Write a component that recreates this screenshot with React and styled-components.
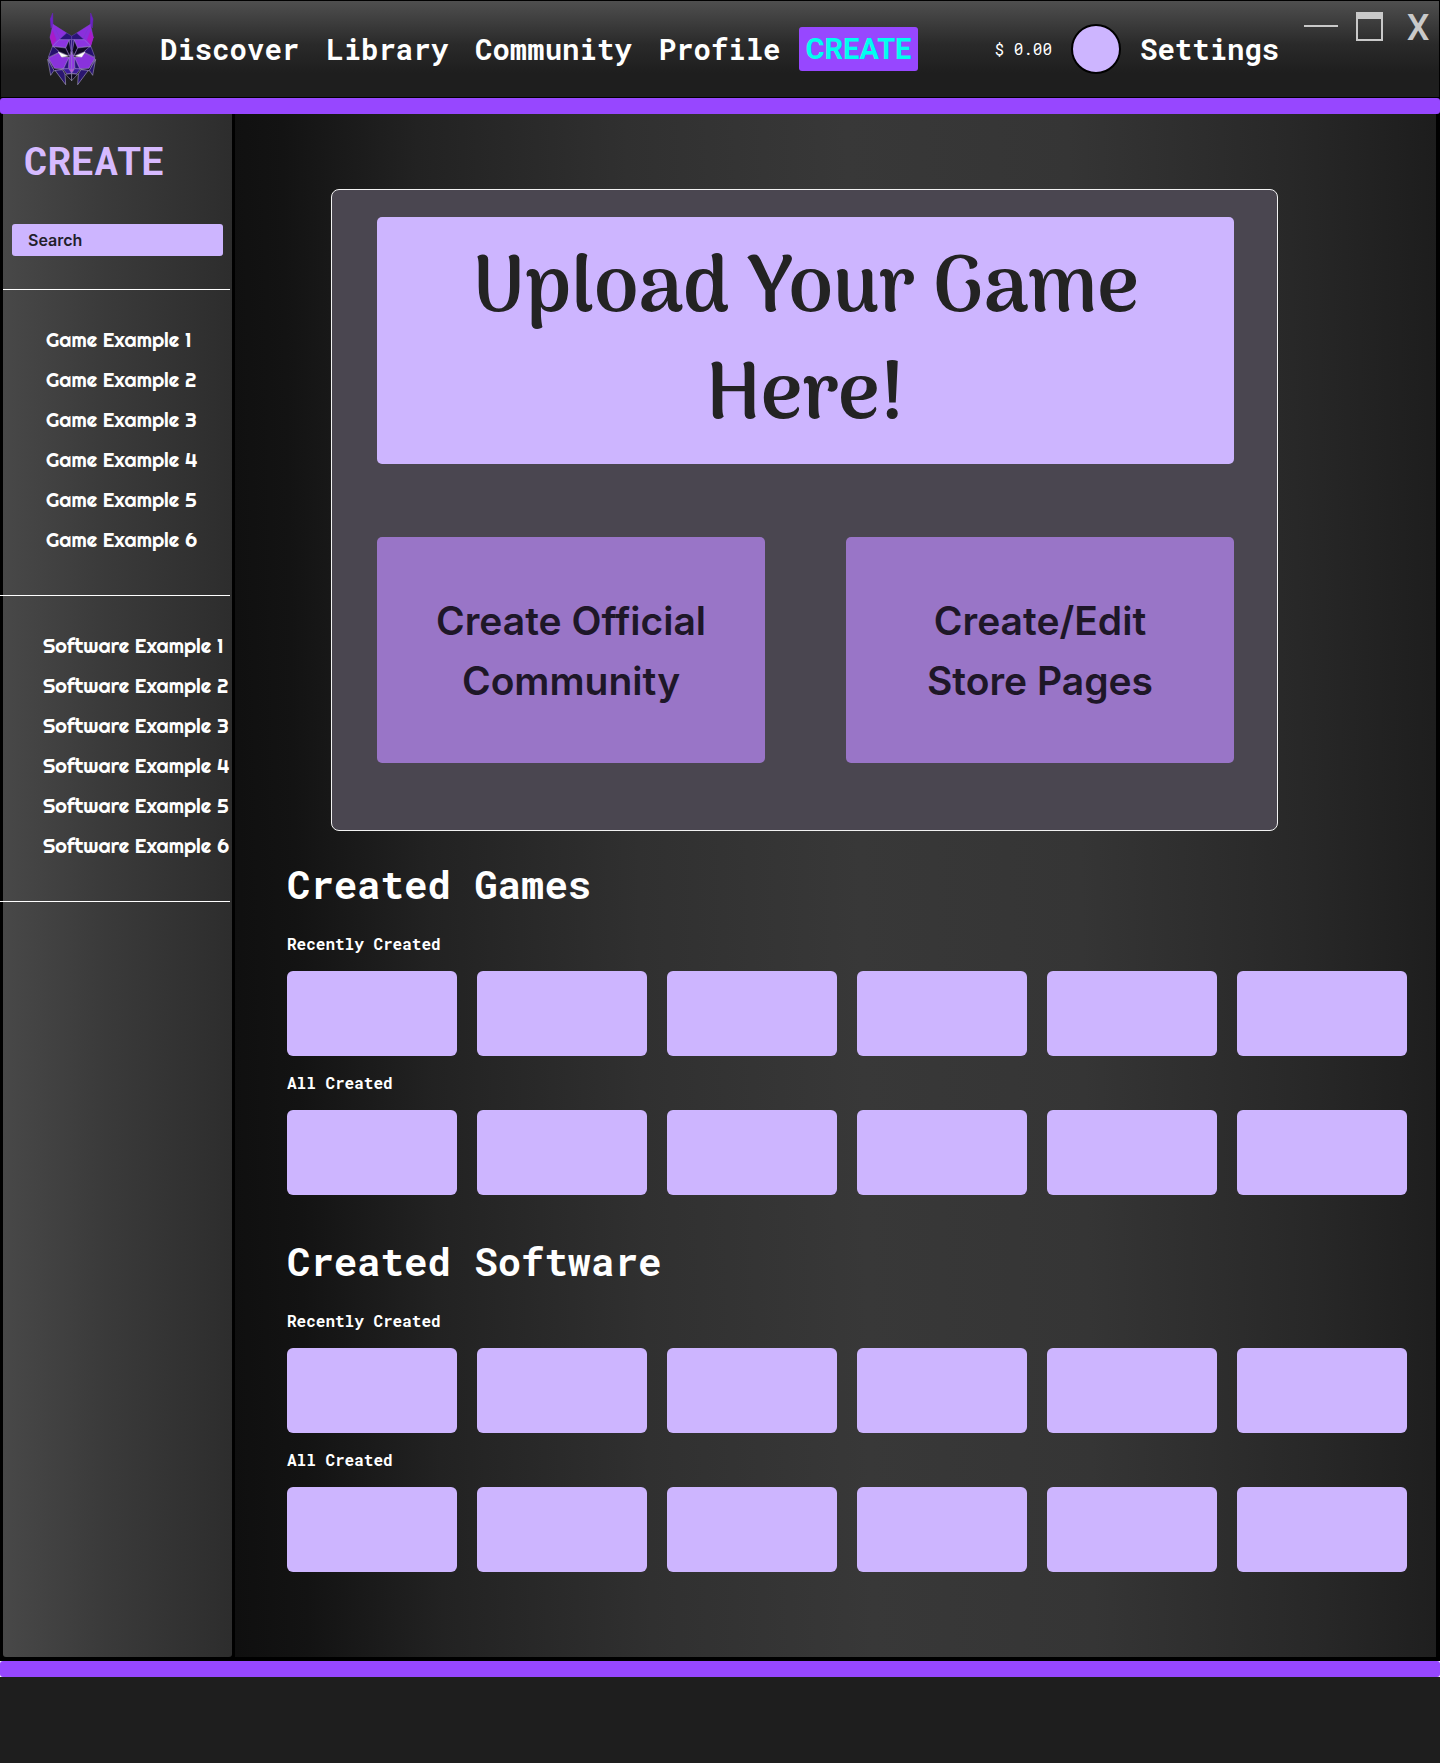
import React from "react";
import styled, { createGlobalStyle, css } from "styled-components";

const mono = '"Roboto Mono", "DejaVu Sans Mono", monospace';
const roboto = 'Roboto, "Liberation Sans", sans-serif';
const inter = 'Inter, "Liberation Sans", sans-serif';
const rounded = 'Righteous, Lato, sans-serif';
const display = 'Arima, "Liberation Serif", serif';

const purple = "#9747ff";
const lilac = "#cdb5ff";

const GlobalStyle = createGlobalStyle`
  *, *::before, *::after { box-sizing: border-box; }
  body { margin: 0; background: #1e1e1e; color: #fff; font-family: ${inter}; }
  button, input { font: inherit; color: inherit; border: 0; margin: 0; padding: 0; background: none; }
  h1, h2, h3, ul { margin: 0; padding: 0; }
  ul { list-style: none; }
  a { color: inherit; text-decoration: none; }
`;

const Header = styled.header`
  display: flex;
  align-items: center;
  height: 98px;
  padding: 0 5px 0 46px;
  border: 1px solid #000;
  background: linear-gradient(180deg, #4f4f4f 0%, #2a2a2a 45%, #1e1e1e 75%);
`;

const LogoLink = styled.a`
  display: flex;
  flex: none;
`;

const Nav = styled.nav`
  display: flex;
  align-items: center;
  gap: 27px;
  margin-left: 63px;
`;

const navText = css`
  font: 700 29px/44px ${mono};
  white-space: nowrap;
`;

const NavLink = styled.a`
  ${navText}
`;

const CreateButton = styled.button`
  height: 44px;
  padding: 0 7px;
  margin-left: 18px;
  border-radius: 3px;
  background: ${purple};
  color: #00fff0;
  font: 700 29px/44px ${roboto};
`;

const Account = styled.div`
  display: flex;
  align-items: center;
  gap: 19px;
  margin-left: 76px;
`;

const Balance = styled.span`
  font: 400 16px/20px ${mono};
  white-space: nowrap;
`;

const Avatar = styled.button`
  width: 50px;
  height: 50px;
  border: 2px solid #000;
  border-radius: 50%;
  background: ${lilac};
`;

const WindowControls = styled.div`
  display: flex;
  align-self: flex-start;
  gap: 18px;
  margin: 9px 0 0 auto;
`;

const WindowButton = styled.button`
  display: flex;
  align-items: center;
  justify-content: center;
  height: 36px;
  min-width: ${(p) => (p.$wide ? "32px" : "0")};
  color: #c9c9c9;
  font: 500 36px/36px ${roboto};
`;

const Bar = styled.div`
  height: 16px;
  border-radius: 3px;
  background: ${purple};
`;

const BarTrack = styled.div`
  background: ${(p) => p.$under};
`;

const Body = styled.div`
  display: grid;
  grid-template-columns: 229px minmax(0, 1fr);
  gap: 3px;
  padding: 0 4px 4px 3px;
  background: #000;
`;

const Sidebar = styled.aside`
  border-radius: 0 0 3px 3px;
  background: linear-gradient(90deg, #484848 0%, #3a3a3a 45%, #2d2d2d 100%);
`;

const SidebarTitle = styled.h1`
  padding: 22px 0 0 21px;
  color: #d6baff;
  font: 700 39px/48px ${mono};
`;

const SearchBox = styled.input`
  display: block;
  width: calc(100% - 18px);
  height: 32px;
  margin: 40px 9px 33px;
  padding: 0 16px;
  border-radius: 3px;
  background: ${lilac};
  color: #231f2b;
  font: 600 16px/32px ${inter};

  &::placeholder {
    color: #231f2b;
    opacity: 1;
  }
`;

const Divider = styled.hr`
  height: 1px;
  margin: 0 2px 0 ${(p) => (p.$bleed ? "-3px" : "0")};
  border: 0;
  background: #fff;
`;

const SideList = styled.ul`
  padding: 30px 0 35px ${(p) => p.$indent}px;
`;

const SideLink = styled.a`
  display: block;
  font: 400 20px/40px ${rounded};
  white-space: nowrap;
`;

const Main = styled.main`
  padding: 75px 29px 85px 52px;
  background: linear-gradient(
    89deg,
    #0f0f0f 0%,
    #131313 6%,
    #222222 17%,
    #303030 34%,
    #383838 52%,
    #353535 70%,
    #282828 88%,
    #1d1d1d 100%
  );
`;

const Panel = styled.section`
  display: grid;
  grid-template-columns: 1fr 1fr;
  column-gap: 81px;
  row-gap: 73px;
  margin: 0 129px 29px 44px;
  padding: 27px 43px 67px 45px;
  border: 1px solid #f2f2f2;
  border-radius: 8px;
  background: #4a4650;
`;

const UploadButton = styled.button`
  grid-column: 1 / -1;
  min-height: 247px;
  padding: 6px 60px 0;
  border-radius: 5px;
  background: ${lilac};
  color: #232323;
  font: 600 80px/107px ${display};
`;

const ActionButton = styled.button`
  min-height: 226px;
  padding: 2px 40px 0;
  border-radius: 5px;
  background: #9975c7;
  color: #1e1728;
  font: 600 39px/60px ${inter};
`;

const Collection = styled.section`
  & + & {
    margin-top: 42px;
  }
`;

const CollectionTitle = styled.h2`
  margin-bottom: 26px;
  font: 700 39px/48px ${mono};
`;

const ShelfTitle = styled.h3`
  margin: 17px 0;
  font: 700 16px/20px ${mono};
`;

const Shelf = styled.ul`
  display: grid;
  grid-template-columns: repeat(6, minmax(0, 1fr));
  gap: 20px;
`;

const Tile = styled.li`
  height: 85px;
  border-radius: 6px;
  background: ${lilac};
`;

const Footer = styled.footer`
  min-height: 86px;
  background: #1e1e1e;
`;

function LynxHalf() {
  return (
    <g stroke="#a98be0" strokeWidth="1.4" strokeLinejoin="round">
      <path d="M157 39L150 57L152 84L158 73Z" fill="#6a22c4" stroke="#6a22c4" />
      <path d="M158 73L199 99L181 120L158 140L149 112Z" fill="#8a2fdc" stroke="#8a3fe0" />
      <path d="M157 90L149 112L156 138L168 119Z" fill="#a81bc8" stroke="none" />
      <path d="M166 88L181 120L199 99" fill="none" stroke="#7040c8" />
      <path d="M199 99L214 108V119H176Z" fill="#2a1478" stroke="#6a4cc0" />
      <path d="M176 119H207L198 143L156 139Z" fill="#8b35e0" />
      <path d="M207 119H214V160L208 150Z" fill="#2a1478" />
      <path d="M206 121L196 144L208 168L212 152Z" fill="#0d0820" />
      <path d="M156 140L144 172L176 157L168 143Z" fill="#25116e" />
      <path d="M160 140L196 144L207 168L178 156Z" fill="#100a26" />
      <path d="M144 174L176 158L184 171L206 172L190 206L162 205Z" fill="#8932dc" />
      <path d="M174 156L202 168L184 171Z" fill="#fff" stroke="#fff" />
      <path d="M214 158L205 176V204L214 210Z" fill="#9038e0" />
      <path d="M206 172L190 206H204Z" fill="#2a1478" />
      <path d="M205 206L214 210V218Z" fill="#d32fd0" />
      <path d="M145 178L162 205L188 207L160 213Z" fill="#0d0820" />
      <path d="M142 178L151 226L161 211Z" fill="#2a1670" stroke="#c5bbe0" />
      <path d="M164 211L196 254L194 222L186 209Z" fill="#2a1670" stroke="#d5cde8" />
      <path d="M188 207L205 206L214 220L200 222Z" fill="#3c1c98" />
      <path d="M196 223L214 221V242Z" fill="#0d0820" stroke="#c5bbe0" />
    </g>
  );
}

function LynxLogo() {
  return (
    <svg width="50" height="74" viewBox="140 36 150 222" aria-hidden="true">
      <LynxHalf />
      <g transform="translate(428 0) scale(-1 1)">
        <LynxHalf />
      </g>
    </svg>
  );
}

const navItems = ["Discover", "Library", "Community", "Profile"];
const numbers = [1, 2, 3, 4, 5, 6];

function ExampleList({ kind, indent }) {
  return (
    <SideList $indent={indent}>
      {numbers.map((n) => (
        <li key={n}>
          <SideLink href="#">{`${kind} Example ${n}`}</SideLink>
        </li>
      ))}
    </SideList>
  );
}

function CreatedCollection({ title }) {
  return (
    <Collection>
      <CollectionTitle>{title}</CollectionTitle>
      {["Recently Created", "All Created"].map((label) => (
        <React.Fragment key={label}>
          <ShelfTitle>{label}</ShelfTitle>
          <Shelf>
            {numbers.map((n) => (
              <Tile key={n} />
            ))}
          </Shelf>
        </React.Fragment>
      ))}
    </Collection>
  );
}

export default function App() {
  return (
    <>
      <GlobalStyle />
      <Header>
        <LogoLink href="#" aria-label="Home">
          <LynxLogo />
        </LogoLink>
        <Nav>
          {navItems.map((item) => (
            <NavLink key={item} href="#">
              {item}
            </NavLink>
          ))}
        </Nav>
        <CreateButton type="button">CREATE</CreateButton>
        <Account>
          <Balance>$ 0.00</Balance>
          <Avatar type="button" aria-label="Account" />
          <NavLink href="#">Settings</NavLink>
        </Account>
        <WindowControls>
          <WindowButton type="button" aria-label="Minimize">
            <svg width="34" height="36" aria-hidden="true">
              <path d="M0 16H34" stroke="currentColor" strokeWidth="2" />
            </svg>
          </WindowButton>
          <WindowButton type="button" aria-label="Maximize">
            <svg width="28" height="36" aria-hidden="true">
              <path d="M1 3V30H26V3" fill="none" stroke="currentColor" strokeWidth="2" />
              <path d="M0 2H27V9H0Z" fill="currentColor" />
            </svg>
          </WindowButton>
          <WindowButton type="button" aria-label="Close" $wide>
            X
          </WindowButton>
        </WindowControls>
      </Header>
      <BarTrack $under="#000">
        <Bar />
      </BarTrack>
      <Body>
        <Sidebar>
          <SidebarTitle>CREATE</SidebarTitle>
          <SearchBox type="search" placeholder="Search" aria-label="Search" />
          <Divider />
          <ExampleList kind="Game" indent={43} />
          <Divider $bleed />
          <ExampleList kind="Software" indent={40} />
          <Divider $bleed />
        </Sidebar>
        <Main>
          <Panel>
            <UploadButton type="button">Upload Your Game Here!</UploadButton>
            <ActionButton type="button">Create Official Community</ActionButton>
            <ActionButton type="button">
              Create/Edit
              <br />
              Store Pages
            </ActionButton>
          </Panel>
          <CreatedCollection title="Created Games" />
          <CreatedCollection title="Created Software" />
        </Main>
      </Body>
      <BarTrack $under="#fff">
        <Bar />
      </BarTrack>
      <Footer />
    </>
  );
}
